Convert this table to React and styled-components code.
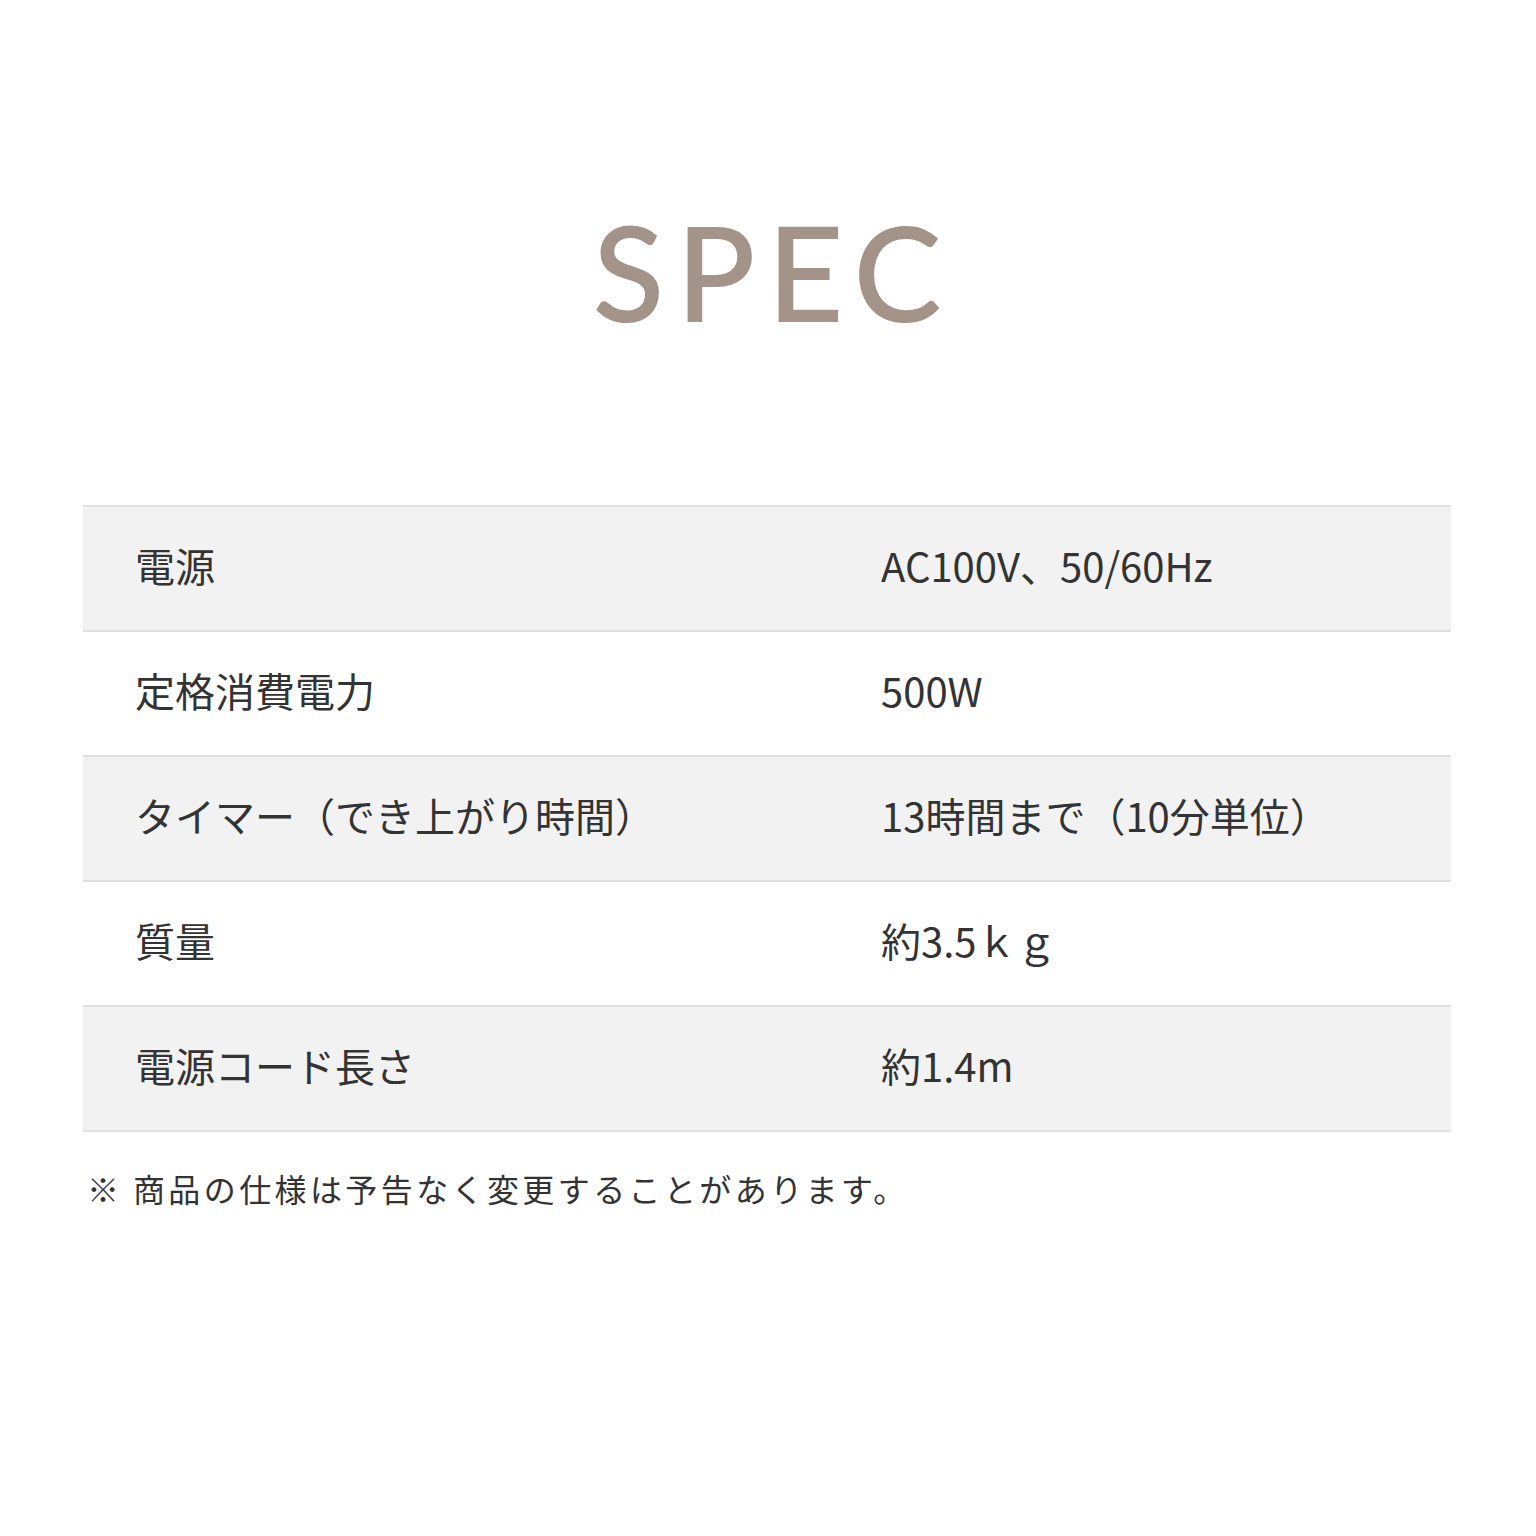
import React from 'react';
import styled, { createGlobalStyle } from 'styled-components';

const GlobalStyle = createGlobalStyle`
  html, body {
    margin: 0;
    padding: 0;
    background: #ffffff;
  }
  body {
    font-family: "Noto Sans CJK JP", "Noto Sans", sans-serif;
    color: #333333;
  }
`;

const specs = [
  { label: '電源', value: 'AC100V、50/60Hz' },
  { label: '定格消費電力', value: '500W' },
  { label: 'タイマー（でき上がり時間）', value: '13時間まで（10分単位）' },
  { label: '質量', value: '約3.5ｋｇ' },
  { label: '電源コード長さ', value: '約1.4m' },
];

function App() {
  return (
    <Page>
      <GlobalStyle />
      <Title>SPEC</Title>
      <Table>
        {specs.map((row, i) => (
          <Row key={row.label} shaded={i % 2 === 0}>
            <Label>{row.label}</Label>
            <Value>{row.value}</Value>
          </Row>
        ))}
      </Table>
      <Note>※ 商品の仕様は予告なく変更することがあります。</Note>
    </Page>
  );
}

const Page = styled.div`
  width: 1536px;
  height: 1536px;
  box-sizing: border-box;
  padding: 196px 85px 0 83px;
`;

const Title = styled.h1`
  margin: 0;
  font-family: "Lato", "Noto Sans", sans-serif;
  font-weight: 400;
  font-size: 130px;
  line-height: 150px;
  letter-spacing: 0.1em;
  padding-left: 0.1em;
  text-align: center;
  color: #a39388;
  -webkit-text-stroke: 2px #a39388;
`;

const Table = styled.div`
  margin-top: 159px;
  border-top: 2px solid #e0e0e0;
`;

const Row = styled.div`
  display: grid;
  grid-template-columns: 746px 1fr;
  align-items: center;
  box-sizing: border-box;
  height: 125px;
  padding: 0 0 8px 52px;
  background: ${(p) => (p.shaded ? '#f2f2f2' : '#ffffff')};
  border-bottom: 2px solid #e0e0e0;
`;

const Label = styled.div`
  font-size: 40px;
  line-height: 1;
  color: #333333;
`;

const Value = styled(Label)``;

const Note = styled.p`
  margin: 33px 0 0 4px;
  font-size: 32px;
  letter-spacing: 3.4px;
  color: #333333;
`;

export default App;
